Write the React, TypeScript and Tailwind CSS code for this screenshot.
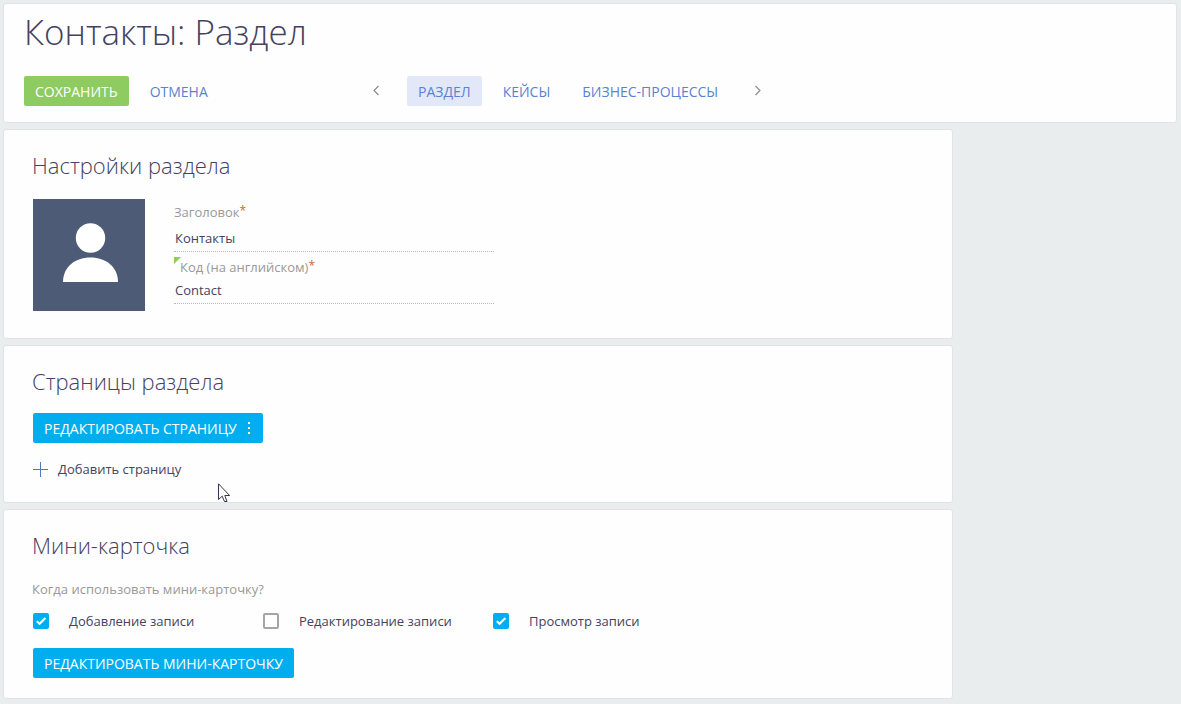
import type { ReactNode } from "react";

function Panel({ title, children, className = "" }: { title: string; children: ReactNode; className?: string }) {
  return (
    <section
      className={`w-full max-w-[950px] rounded-[3px] border border-[#e1e4e4] bg-[#fefefe] px-[29px] pt-5 ${className}`}
    >
      <h2 className="-ml-px text-[22px] leading-[30px] font-light text-[#444260]">{title}</h2>
      {children}
    </section>
  );
}

function Field({
  id,
  label,
  value,
  marked = false,
  className = "",
}: {
  id: string;
  label: string;
  value: string;
  marked?: boolean;
  className?: string;
}) {
  return (
    <div className={`relative flex flex-col ${className}`}>
      {marked && (
        <svg className="absolute top-0 left-0" width="7" height="7" viewBox="0 0 7 7" aria-hidden="true">
          <path d="M0 0H7L0 7Z" fill="#8ecb60" />
        </svg>
      )}
      <label htmlFor={id} className={`flex items-start text-[13px] leading-5 text-[#999] ${marked ? "pl-[6px]" : ""}`}>
        {label}
        <span className="text-[12px] leading-[18px] text-[#d0663c]">*</span>
      </label>
      <input
        id={id}
        type="text"
        defaultValue={value}
        className="block h-[27px] w-full border-b border-dotted border-[#b8b8b8] bg-transparent px-px text-[13px] text-[#444260] outline-none"
      />
    </div>
  );
}

function Check({ id, label, checked = false }: { id: string; label: string; checked?: boolean }) {
  return (
    <div className="flex w-[230px] items-center gap-5">
      <span className="relative flex size-4">
        <input
          id={id}
          type="checkbox"
          defaultChecked={checked}
          className="peer size-4 appearance-none rounded-[2px] border-2 border-[#aaa3a1] bg-white checked:border-[#00aeef] checked:bg-[#00aeef]"
        />
        <svg
          className="pointer-events-none absolute inset-0 hidden peer-checked:block"
          width="16"
          height="16"
          viewBox="0 0 16 16"
          fill="none"
          aria-hidden="true"
        >
          <path d="M3.8 8.2L6.6 10.8L12.4 5" stroke="#fff" strokeWidth="2" />
        </svg>
      </span>
      <label htmlFor={id} className="text-[13px] leading-5 whitespace-nowrap text-[#444260]">
        {label}
      </label>
    </div>
  );
}

function Chevron({ d, label }: { d: string; label: string }) {
  return (
    <button type="button" aria-label={label} className="flex h-[30px] w-4 items-center justify-center">
      <svg width="8" height="12" viewBox="0 0 8 12" fill="none" aria-hidden="true">
        <path d={d} stroke="#888" strokeWidth="1.1" />
      </svg>
    </button>
  );
}

const tab = "flex h-[30px] items-center rounded-[2px] px-[11px] text-[14px] text-[#5a82d2]";
const blue = "flex h-[30px] items-center rounded-[2px] bg-[#00aeef] px-[11px] text-[14px] text-white";

export default function App() {
  return (
    <div className="flex min-h-screen flex-col gap-[6px] bg-[#e9eded] py-[3px] pr-1 pl-[3px] font-['Open_Sans',sans-serif]">
      <header className="rounded-[3px] border border-[#e1e4e4] bg-[#fefefe] px-5 pt-1 pb-4">
        <h1 className="text-[35px] leading-[48px] font-light text-[#444260]">Контакты: Раздел</h1>
        <div className="mt-5 flex items-center">
          <div className="flex w-[344px] gap-[10px]">
            <button type="button" className="flex h-[30px] items-center rounded-[2px] bg-[#8ecb60] px-[11px] text-[14px] text-white">
              СОХРАНИТЬ
            </button>
            <button type="button" className={tab}>
              ОТМЕНА
            </button>
          </div>
          <nav className="flex items-center gap-[10px]" aria-label="Вкладки">
            <Chevron label="Назад" d="M6.5 1L2 5.5L6.5 10" />
            <a href="#section" className={`${tab} ml-[13px] bg-[#e2e8f8]`}>
              РАЗДЕЛ
            </a>
            <a href="#cases" className={tab}>
              КЕЙСЫ
            </a>
            <a href="#processes" className={`${tab} mr-[11px]`}>
              БИЗНЕС-ПРОЦЕССЫ
            </a>
            <Chevron label="Вперёд" d="M1.5 1L6 5.5L1.5 10" />
          </nav>
        </div>
      </header>

      <Panel title="Настройки раздела" className="pb-[27px]">
        <div className="mt-[19px] flex gap-[29px]">
          <svg className="shrink-0" width="112" height="112" viewBox="0 0 112 112" role="img" aria-label="Контакты">
            <rect width="112" height="112" fill="#4d5b76" />
            <circle cx="57.5" cy="39" r="14.7" fill="#fff" />
            <path d="M30 83C30 68 42 58.5 57.5 58.5S85 68 85 83Z" fill="#fff" />
          </svg>
          <div className="w-full max-w-[320px]">
            <Field id="title" label="Заголовок" value="Контакты" className="gap-[3px] pt-[3px]" />
            <Field id="code" label="Код (на английском)" value="Contact" marked className="mt-[5px]" />
          </div>
        </div>
      </Panel>

      <Panel title="Страницы раздела" className="pb-[23px]">
        <button type="button" className={`${blue} mt-[17px] gap-[10px]`}>
          РЕДАКТИРОВАТЬ СТРАНИЦУ
          <svg width="5" height="14" viewBox="0 0 5 14" fill="#fff" aria-hidden="true">
            <path d="M1 1h2v2H1zM1 6h2v2H1zM1 11h2v2H1z" />
          </svg>
        </button>
        <button type="button" className="mt-4 flex items-center gap-[10px] text-[13px] leading-5 text-[#444260]">
          <svg width="15" height="15" viewBox="0 0 15 15" aria-hidden="true">
            <path d="M7 0h1v15H7zM0 7h15v1H0z" fill="#4a78cc" />
          </svg>
          Добавить страницу
        </button>
      </Panel>

      <Panel title="Мини-карточка" className="pb-5">
        <fieldset className="mt-[19px]">
          <legend className="-ml-px text-[13px] leading-5 text-[#999]">Когда использовать мини-карточку?</legend>
          <div className="mt-3 flex flex-wrap">
            <Check id="add" label="Добавление записи" checked />
            <Check id="edit" label="Редактирование записи" />
            <Check id="view" label="Просмотр записи" checked />
          </div>
        </fieldset>
        <button type="button" className={`${blue} mt-[17px]`}>
          РЕДАКТИРОВАТЬ МИНИ-КАРТОЧКУ
        </button>
      </Panel>

      <svg
        className="pointer-events-none absolute top-[483px] left-[218px]"
        width="13"
        height="20"
        viewBox="0 0 13 20"
        aria-hidden="true"
      >
        <path
          d="M.5 .8V16.5L4.2 13.2L6.5 18.5H9L6.8 12.5H11.6Z"
          fill="#fff"
          stroke="#35334f"
          strokeWidth="1"
        />
      </svg>
    </div>
  );
}
